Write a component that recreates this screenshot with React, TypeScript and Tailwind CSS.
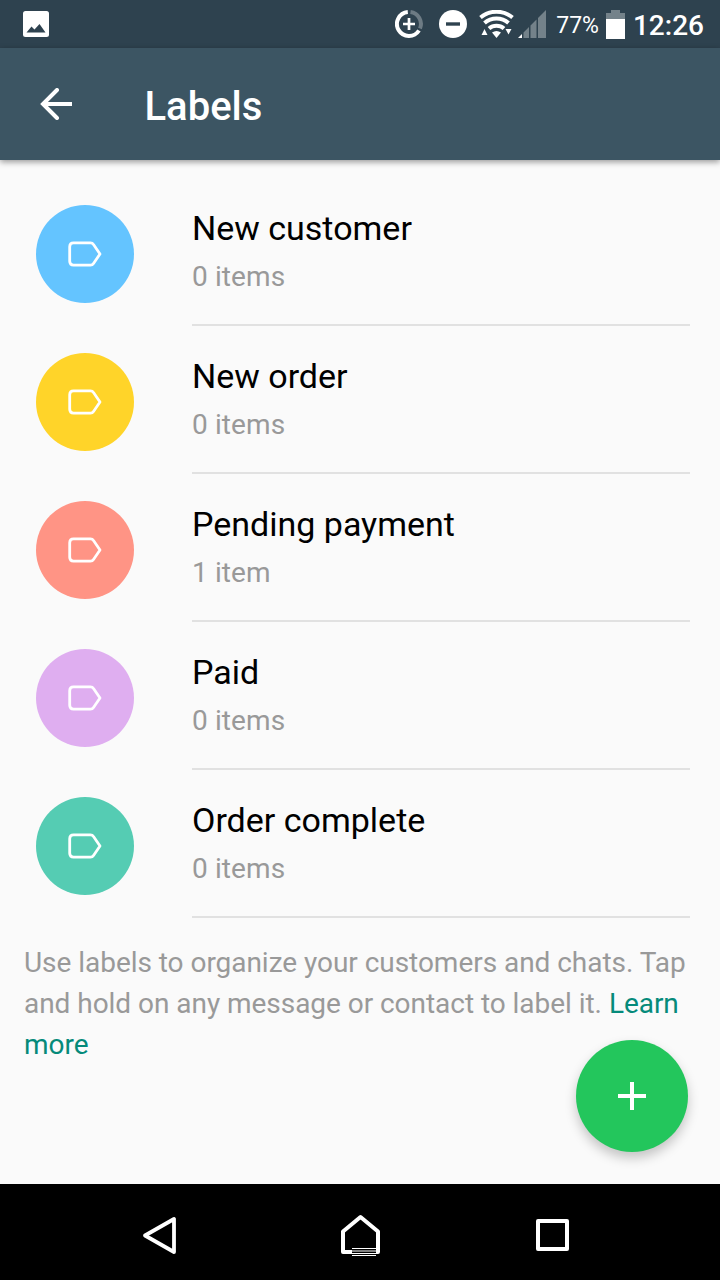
const labels = [
  { name: 'New customer', count: '0 items', color: 'bg-[#64c4ff]' },
  { name: 'New order', count: '0 items', color: 'bg-[#ffd429]' },
  { name: 'Pending payment', count: '1 item', color: 'bg-[#ff9485]' },
  { name: 'Paid', count: '0 items', color: 'bg-[#dfaef0]' },
  { name: 'Order complete', count: '0 items', color: 'bg-[#55ccb3]' },
]

function StatusBar() {
  return (
    <div className="flex h-12 shrink-0 items-center bg-[#2e424f] pl-[23px] pr-4 text-white">
      <svg width="26" height="26" viewBox="0 0 26 26">
        <rect width="26" height="26" rx="2.5" fill="#fff" />
        <path d="M3.5 21.5 8.5 15.5 11.5 18.5 16.5 13 22.5 21.5Z" fill="#2e424f" />
      </svg>

      {/* data saver */}
      <svg className="ml-auto" width="28" height="28" viewBox="0 0 28 28" fill="none">
        <path d="M15.5 2A12 12 0 0 1 25 18.5" stroke="#6d7b84" strokeWidth="4" />
        <path d="M12.8 2A12 12 0 1 0 24 20.5" stroke="#fff" strokeWidth="4" />
        <path d="M14 8v12M8 14h12" stroke="#fff" strokeWidth="2.7" />
      </svg>

      {/* do not disturb */}
      <svg className="ml-4" width="28" height="28" viewBox="0 0 28 28">
        <circle cx="14" cy="14" r="14" fill="#fff" />
        <path d="M7 14h14" stroke="#2e424f" strokeWidth="3.4" />
      </svg>

      {/* wifi */}
      <svg className="ml-3" width="36" height="28" viewBox="0 0 36 28" fill="none">
        <path d="M1.5 7.500A25 25 0 0 1 33.500 7.500" stroke="#fff" strokeWidth="4" />
        <path d="M5.500 13A18 18 0 0 1 29.500 13" stroke="#fff" strokeWidth="4" />
        <path d="M10 18.500A11.500 11.500 0 0 1 25 18.500" stroke="#fff" strokeWidth="4" />
        <path d="M13 22.500Q17.500 19.500 22 22.500L17.500 28Z" fill="#fff" />
        <path d="M2.500 25 5.500 19 8.500 25ZM26.500 19h6l-3 5.500Z" fill="#fff" />
      </svg>

      {/* mobile signal */}
      <svg className="ml-[3px]" width="28" height="28" viewBox="0 0 28 28">
        <path d="M0 28 4 24V28Z" fill="#fff" />
        <path d="M5.500 28V22.500L11 17V28ZM12.500 28V15.500L18.500 9.500V28ZM20 28V8L28 0V28Z" fill="#74828a" />
      </svg>

      <span className="ml-2.5 mt-1 text-[23px] leading-7">77%</span>

      <svg className="ml-[7px]" width="19" height="29" viewBox="0 0 19 29">
        <path d="M0 3h5V0h9v3h5v6H0Z" fill="#74828a" />
        <path d="M0 9h19v20H0Z" fill="#fff" />
      </svg>

      <span className="ml-2 mt-1 text-[28px] font-medium leading-8">12:26</span>
    </div>
  )
}

function Toolbar() {
  return (
    <header className="z-10 flex h-28 shrink-0 items-center bg-[#3c5563] pl-10 text-white shadow-[0_2px_6px_rgba(0,0,0,0.4)]">
      <svg width="32" height="32" viewBox="0 0 32 32" fill="none" stroke="#fff" strokeWidth="4">
        <path d="M32 16H3" />
        <path d="M17 2 3 16l14 14" strokeLinecap="round" />
      </svg>
      <h1 className="ml-[72.5px] mt-1.5 text-[40px] font-medium leading-[48px]">Labels</h1>
    </header>
  )
}

function LabelIcon() {
  return (
    <svg width="34" height="26" viewBox="0 0 34 26" fill="none" stroke="#fff" strokeWidth="2.800" strokeLinejoin="round">
      <path d="M5.500 1.900H22.500Q24.500 1.900 25.500 3.500L32 13l-6.500 9.500Q24.500 24.100 22.500 24.100H5.500Q1.700 24.100 1.700 20.300V5.700Q1.700 1.900 5.500 1.900Z" />
    </svg>
  )
}

function LabelRow({ name, count, color }: { name: string; count: string; color: string }) {
  return (
    <li className="flex h-[148px] pl-9 pr-[30px]">
      <div className={`mt-[27px] flex size-[98px] shrink-0 items-center justify-center rounded-full ${color}`}>
        <LabelIcon />
      </div>
      <div className="ml-[58px] flex-1 border-b-2 border-[#e1e1e1] pt-[30px]">
        <div className="text-[34px] leading-10 text-black">{name}</div>
        <div className="mt-[13px] text-[28px] leading-8 tracking-[0.1px] text-[#999]">{count}</div>
      </div>
    </li>
  )
}

function NavigationBar() {
  return (
    <nav className="flex h-24 shrink-0 items-center bg-black pl-[142px] pt-1.5">
      <svg width="36" height="40" viewBox="0 0 36 40" fill="none" stroke="#fff" strokeWidth="3.800" strokeLinejoin="round">
        <path d="M32 4V37L3 20.500Z" />
      </svg>
      <svg className="ml-[162px]" width="42" height="44" viewBox="0 0 42 44" fill="none">
        <path d="M3 39V18.500L20.500 4 38 18.500V39Z" stroke="#fff" strokeWidth="4" strokeLinejoin="round" />
        <path d="M12 35h24v9H12Z" fill="#000" />
        <path d="M12 35.500h24M12 38h24M12 40.500h24M12 42.500h24" stroke="#fff" />
      </svg>
      <svg className="ml-[154px]" width="33" height="32" viewBox="0 0 33 32" fill="none">
        <rect x="2" y="2" width="29" height="28" stroke="#fff" strokeWidth="4" strokeLinejoin="round" />
      </svg>
    </nav>
  )
}

export default function App() {
  return (
    <div className="relative flex h-[1280px] w-[720px] flex-col overflow-hidden bg-[#fafafa] font-[Roboto,sans-serif]">
      <StatusBar />
      <Toolbar />

      <main className="flex-1 pt-[18px]">
        <ul>
          {labels.map((label) => (
            <LabelRow key={label.name} {...label} />
          ))}
        </ul>
        <p className="px-6 pt-6 text-[28px] leading-[41px] tracking-[-0.04px] text-[#999]">
          Use labels to organize your customers and chats. Tap and hold on any message or contact to label it.{' '}
          <a href="#" className="text-[#058a7a]">Learn more</a>
        </p>
      </main>

      <button
        aria-label="Add label"
        className="absolute bottom-32 right-8 flex size-28 items-center justify-center rounded-full bg-[#23c65c] shadow-[0_6px_12px_rgba(0,0,0,0.22)]"
      >
        <svg width="28" height="28" viewBox="0 0 28 28" stroke="#fff" strokeWidth="4">
          <path d="M14 0v28M0 14h28" />
        </svg>
      </button>

      <NavigationBar />
    </div>
  )
}
